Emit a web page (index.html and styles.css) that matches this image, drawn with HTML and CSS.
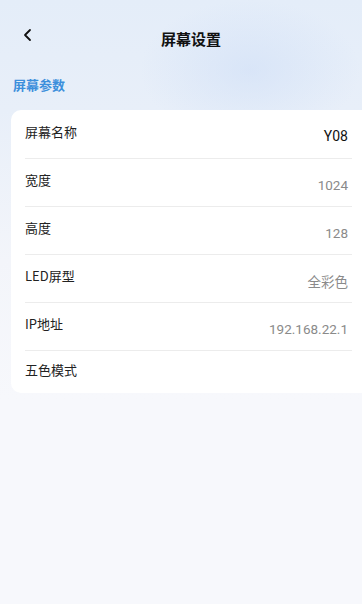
FILE: index.html
```html
<!DOCTYPE html>
<html lang="zh-CN">
<head>
    <meta charset="UTF-8">
    <meta name="viewport" content="width=device-width, initial-scale=1.0">
    <title>屏幕设置</title>
    <link rel="stylesheet" href="styles.css">
</head>
<body>
    <div class="page">
        <div class="nav">
            <span class="back">
                <svg width="12" height="14" viewBox="0 0 12 14"><path d="M8 2 L3 7 L8 12" fill="none" stroke="#111" stroke-width="1.8" stroke-linecap="round" stroke-linejoin="round"/></svg>
            </span>
            <div class="nav-title">屏幕设置</div>
        </div>

        <div class="section-title">屏幕参数</div>

        <div class="card">
            <div class="row">
                <span class="label">屏幕名称</span>
                <span class="value dark">Y08</span>
            </div>
            <div class="row">
                <span class="label">宽度</span>
                <span class="value">1024</span>
            </div>
            <div class="row">
                <span class="label">高度</span>
                <span class="value">128</span>
            </div>
            <div class="row">
                <span class="label">LED屏型</span>
                <span class="value">全彩色</span>
            </div>
            <div class="row">
                <span class="label">IP地址</span>
                <span class="value">192.168.22.1</span>
            </div>
            <div class="row">
                <span class="label">五色模式</span>
                <span class="value"></span>
            </div>
        </div>
    </div>
</body>
</html>
```

FILE: styles.css
```css
* {
    margin: 0;
    padding: 0;
    box-sizing: border-box;
}

body {
    font-family: "Noto Sans CJK SC", "Noto Sans", sans-serif;
    background: #f6f7fb;
    color: #222;
    width: 362px;
    height: 604px;
    overflow: hidden;
}

.page {
    min-height: 604px;
    background:
        radial-gradient(ellipse 110px 70px at 250px 70px, rgba(200, 218, 246, 0.45), rgba(200, 218, 246, 0)),
        linear-gradient(180deg, #e4edf9 0px, #e8eff9 110px, #f3f5fa 260px, #f7f8fc 400px);
}

.nav {
    height: 70px;
    display: flex;
    align-items: center;
    justify-content: center;
    position: relative;
    padding-top: 6px;
}

.back {
    position: absolute;
    left: 22px;
    top: 28px;
    display: flex;
}

.nav-title {
    font-size: 15px;
    font-weight: 700;
    color: #111;
    margin-left: 20px;
}

.section-title {
    font-size: 13px;
    font-weight: 700;
    color: #3c8fdc;
    padding-left: 13px;
    height: 40px;
    line-height: 30px;
}

.card {
    margin-left: 11px;
    background: #fff;
    border-radius: 10px 0 0 10px;
    padding: 0 10px 0 14px;
}

.row {
    height: 48px;
    display: flex;
    align-items: center;
    justify-content: space-between;
    border-bottom: 1px solid #ececec;
    padding-right: 4px;
}

.row:first-child {
    height: 49px;
}

.row:last-child {
    border-bottom: none;
    height: 42px;
}

.label {
    font-size: 13px;
    color: #222;
    margin-top: -6px;
}

.value {
    font-size: 13.5px;
    color: #8a8a8a;
    font-family: "Roboto", "Noto Sans CJK SC", sans-serif;
    margin-top: 4px;
}

.value.dark {
    color: #111;
    font-size: 14px;
}
```
